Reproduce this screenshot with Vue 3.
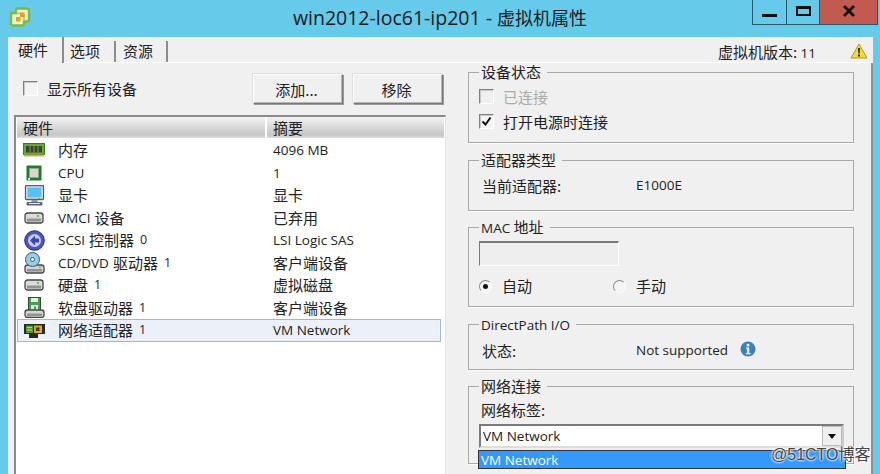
<script setup>
const rows = [
  { icon: 'mem', cjk: '内存', summary: '4096 MB' },
  { icon: 'cpu', lat: 'CPU', summary: '1' },
  { icon: 'monitor', cjk: '显卡', summaryCjk: '显卡' },
  { icon: 'disk', lat: 'VMCI', cjk: '设备', summaryCjk: '已弃用' },
  { icon: 'scsi', lat: 'SCSI', cjk: '控制器', count: '0', summary: 'LSI Logic SAS' },
  { icon: 'cd', lat: 'CD/DVD', cjk: '驱动器', count: '1', summaryCjk: '客户端设备' },
  { icon: 'disk', cjk: '硬盘', count: '1', summaryCjk: '虚拟磁盘' },
  { icon: 'floppy', cjk: '软盘驱动器', count: '1', summaryCjk: '客户端设备' },
  { icon: 'nic', cjk: '网络适配器', count: '1', summary: 'VM Network', selected: true }
]
</script>

<template>
  <div class="win">
    <header class="titlebar">
      <svg class="logo" width="22" height="22" viewBox="0 0 22 22">
        <path d="M9 2.500h9a2 2 0 0 1 2 2v9a2 2 0 0 1-2 2h-3v2a2 2 0 0 1-2 2H4a2 2 0 0 1-2-2V9a2 2 0 0 1 2-2h3V4.500a2 2 0 0 1 2-2z" fill="#eaf3cf" stroke="#7fb83a" stroke-width="2.400"/>
        <path d="M7 7.500h6a2 2 0 0 1 2 2v6" fill="none" stroke="#9ccb5a" stroke-width="1.500"/>
        <rect x="7" y="11" width="4.500" height="4.500" fill="#e8a01f"/>
        <rect x="11" y="6.500" width="4.500" height="4.500" fill="#e8a01f"/>
      </svg>
      <h1 class="title"><span class="t-lat">win2012-loc61-ip201 - </span><span class="t-cjk">虚拟机属性</span></h1>
      <div class="controls">
        <span class="ctl"><i class="min"></i></span>
        <span class="ctl"><i class="max"></i></span>
        <span class="ctl close">
          <svg width="14" height="12" viewBox="0 0 14 12"><path d="M2 1l10 10M12 1L2 11" stroke="#111" stroke-width="2.800"/></svg>
        </span>
      </div>
    </header>

    <main class="panel">
      <div class="tabbar">
        <div class="tabs">
          <span class="tab active">硬件</span>
          <span class="tab">选项</span>
          <span class="tab">资源</span>
        </div>
        <div class="version">
          <span>虚拟机版本: <span class="lat">11</span></span>
          <svg width="18" height="16" viewBox="0 0 18 16">
            <path d="M9 1 L17 15 H1 Z" fill="#f6d93a" stroke="#b59a1a" stroke-linejoin="round"/>
            <path d="M8 5h2l-.4 5.500H8.400z" fill="#222"/>
            <rect x="8" y="11.500" width="2" height="2" fill="#222"/>
          </svg>
        </div>
      </div>

      <div class="content">
        <section class="left">
          <div class="toolbar">
            <label class="show-all"><span class="box"></span>显示所有设备</label>
            <div class="buttons">
              <button class="btn">添加...</button>
              <button class="btn">移除</button>
            </div>
          </div>
          <div class="list">
            <div class="list-head">
              <span class="col-a">硬件</span>
              <span class="col-b">摘要</span>
            </div>
            <div v-for="(r, i) in rows" :key="i" class="row" :class="{ selected: r.selected }">
              <span class="col-a cell">
                <span class="ico">
                  <svg v-if="r.icon === 'mem'" width="22" height="14" viewBox="0 0 22 14">
                    <rect x="0.500" y="0.500" width="21" height="11" fill="#66a63c" stroke="#3b7a22"/>
                    <rect x="3" y="3" width="16" height="6.500" fill="#35491f"/>
                    <path d="M7 3v6.500M11 3v6.500M15 3v6.500" stroke="#8b9a60"/>
                    <rect x="1" y="11.500" width="20" height="2" fill="#bdb84f"/>
                  </svg>
                  <svg v-else-if="r.icon === 'cpu'" width="16" height="16" viewBox="0 0 16 16">
                    <rect x="0.500" y="0.500" width="15" height="15" fill="#1f7a2a"/>
                    <rect x="3.500" y="3.500" width="9" height="9" fill="#d8d8cc" stroke="#8ca98c"/>
                    <rect x="2" y="13" width="2" height="2" fill="#dfe8df"/>
                  </svg>
                  <svg v-else-if="r.icon === 'monitor'" width="21" height="21" viewBox="0 0 21 21">
                    <rect x="1.500" y="0.500" width="18" height="14" rx="1" fill="#dfe5ec" stroke="#51606e" stroke-width="1.300"/>
                    <rect x="3.500" y="2.500" width="14" height="10" fill="#5ac0f2"/>
                    <rect x="14" y="13" width="2" height="1" fill="#63c03d"/>
                    <path d="M8 15h5l1 2H7z" fill="#8a96a2"/>
                    <rect x="2.500" y="17" width="16" height="3.500" rx="1" fill="#5c6873"/>
                    <path d="M5 18.500h11" stroke="#dfe5ec"/>
                  </svg>
                  <svg v-else-if="r.icon === 'disk'" width="20" height="12" viewBox="0 0 20 12">
                    <rect x="1" y="1" width="18" height="10" rx="2.500" fill="#dcdcd6" stroke="#45484a" stroke-width="1.300"/>
                    <rect x="3" y="6.500" width="14" height="3" fill="#8f9492"/>
                    <rect x="13" y="3" width="2" height="2" fill="#63c03d"/>
                  </svg>
                  <svg v-else-if="r.icon === 'scsi'" width="21" height="21" viewBox="0 0 21 21">
                    <circle cx="10.500" cy="10.500" r="9.800" fill="#4a55c0" stroke="#2a2e78"/>
                    <circle cx="10.500" cy="10.500" r="6.500" fill="#c8ccf2"/>
                    <path d="M11 5.500l-5 5 5 5v-3h4v-4h-4z" fill="#3b46b0"/>
                  </svg>
                  <svg v-else-if="r.icon === 'cd'" width="21" height="22" viewBox="0 0 21 22">
                    <rect x="1" y="13" width="19" height="8" rx="2.500" fill="#d4d6d2" stroke="#45484a" stroke-width="1.300"/>
                    <rect x="3" y="17" width="15" height="2.500" fill="#8f9492"/>
                    <circle cx="8.500" cy="7.500" r="7" fill="#8fd0ee" stroke="#375a70"/>
                    <circle cx="8.500" cy="7.500" r="2" fill="#fff" stroke="#375a70"/>
                    <rect x="15" y="14.500" width="2" height="1.500" fill="#63c03d"/>
                  </svg>
                  <svg v-else-if="r.icon === 'floppy'" width="21" height="21" viewBox="0 0 21 21">
                    <rect x="4.500" y="0.500" width="12" height="14" fill="#4f9a54" stroke="#2c4f30"/>
                    <rect x="7" y="1" width="7" height="4" fill="#e8efe6"/>
                    <rect x="7" y="8" width="7" height="6" fill="#dfe6dd"/>
                    <rect x="10" y="9.500" width="2" height="3" fill="#4f9a54"/>
                    <rect x="1" y="13" width="19" height="7.500" rx="2.500" fill="#d4d6d2" stroke="#45484a" stroke-width="1.300"/>
                    <rect x="3" y="16.500" width="15" height="2.500" fill="#8f9492"/>
                  </svg>
                  <svg v-else width="21" height="15" viewBox="0 0 21 15">
                    <path d="M0 1h21v10h-7v4H5v-4H0z" fill="#2c2a20"/>
                    <rect x="2" y="2.500" width="7" height="7.500" fill="#4f9a35"/>
                    <rect x="10" y="2.500" width="8" height="7.500" fill="#d8a82a"/>
                    <rect x="12" y="4.500" width="3.500" height="3.500" fill="#5a2a18"/>
                    <path d="M3 4.500h5M3 7h5" stroke="#d8d04a"/>
                  </svg>
                </span>
                <span v-if="r.lat" class="lat">{{ r.lat }}</span>
                <span v-if="r.cjk" :class="{ spaced: r.lat }">{{ r.cjk }}</span>
                <span v-if="r.count" class="count lat">{{ r.count }}</span>
              </span>
              <span class="col-b cell">
                <span v-if="r.summary" class="lat">{{ r.summary }}</span>
                <span v-else>{{ r.summaryCjk }}</span>
              </span>
            </div>
          </div>
        </section>

        <section class="right">
          <fieldset class="group g1">
            <legend>设备状态</legend>
            <label class="check off"><span class="box"></span>已连接</label>
            <label class="check">
              <span class="box">
                <svg width="13" height="13" viewBox="0 0 13 13"><path d="M2.500 6.500l3 3 5-7" fill="none" stroke="#111" stroke-width="2"/></svg>
              </span>打开电源时连接
            </label>
          </fieldset>

          <fieldset class="group g2">
            <legend>适配器类型</legend>
            <div class="kv"><span class="k">当前适配器:</span><span class="lat">E1000E</span></div>
          </fieldset>

          <fieldset class="group g3">
            <legend><span class="lat">MAC</span> 地址</legend>
            <div class="mac"></div>
            <div class="radios">
              <label class="radio on"><span class="dot"></span>自动</label>
              <label class="radio"><span class="dot"></span>手动</label>
            </div>
          </fieldset>

          <fieldset class="group g4">
            <legend><span class="lat">DirectPath I/O</span></legend>
            <div class="kv">
              <span class="k">状态:</span>
              <span class="lat">Not supported</span>
              <svg class="info" width="16" height="16" viewBox="0 0 16 16">
                <circle cx="8" cy="8" r="7.500" fill="#3a80c8"/>
                <circle cx="8" cy="4.200" r="1.400" fill="#fff"/>
                <path d="M6 6.500h3.200v5.500h1.300v1.300h-4.500v-1.300h1.200V7.800H6z" fill="#fff"/>
              </svg>
            </div>
          </fieldset>

          <fieldset class="group g5">
            <legend>网络连接</legend>
            <div class="net-label">网络标签:</div>
            <div class="combo">
              <span class="lat">VM Network</span>
              <span class="arrow"><i></i></span>
            </div>
            <div class="drop"><span class="lat">VM Network</span></div>
          </fieldset>
        </section>
      </div>
    </main>

    <div class="watermark">@51CTO博客</div>
  </div>
</template>

<style>
html, body { margin: 0; padding: 0; }
</style>

<style scoped>
.win {
  position: relative;
  width: 880px;
  height: 474px;
  overflow: hidden;
  background: #66cbeb;
  font-family: "Noto Sans CJK SC", "Open Sans", sans-serif;
  color: #222;
  display: flex;
  flex-direction: column;
  font-size: 15px;
}
.lat {
  font-family: "Open Sans", sans-serif;
  font-size: 13.500px;
}
.spaced { margin-left: 4px; }
.titlebar {
  height: 37px;
  flex: none;
  position: relative;
  display: flex;
  align-items: center;
  justify-content: center;
}
.logo { position: absolute; left: 9px; top: 6px; }
.title {
  margin: 0 0 7px 0;
  font-weight: 400;
  color: #1a1a1a;
  line-height: 26px;
  white-space: pre;
}
.t-lat { font-family: "Open Sans", sans-serif; font-size: 19.500px; }
.t-cjk { font-size: 18px; }
.controls {
  position: absolute;
  top: 0;
  left: 752px;
  display: flex;
  height: 25px;
  border: 1px solid #2c5566;
  border-top: 0;
  box-sizing: border-box;
}
.ctl {
  width: 33px;
  display: flex;
  align-items: center;
  justify-content: center;
  border-right: 1px solid #2c5566;
}
.ctl:nth-child(2) { width: 32px; }
.ctl.close { width: 57px; background: #c25a50; border-right: 0; padding-bottom: 3px; box-sizing: border-box; }
.min { width: 15px; height: 3px; background: #111; margin-top: 7px; }
.max { width: 11px; height: 5px; border: 2px solid #111; border-top-width: 3px; margin-bottom: 3px; }

.panel {
  margin: 0 7px 0 8px;
  flex: 1;
  background: #f0f0f0;
  border-right: 2px solid #8f8f8f;
  box-sizing: border-box;
  display: flex;
  flex-direction: column;
  min-height: 0;
}
.tabbar {
  height: 26px;
  flex: none;
  display: flex;
  justify-content: space-between;
  border-bottom: 1px solid #fff;
  box-sizing: border-box;
  margin-right: -2px;
  background: #f0f0f0;
}
.tabs { display: flex; align-items: flex-end; padding-left: 2px; }
.tab {
  height: 21px;
  padding: 0 0 0 6px;
  line-height: 20px;
  border-right: 2px solid #8d8d8d;
  box-sizing: border-box;
  width: 52px;
}
.tab:last-child { padding-left: 7px; }
.tab.active {
  height: 26px;
  width: 54px;
  line-height: 25px;
  padding-left: 8px;
  margin-bottom: -1px;
  position: relative;
  background: #f0f0f0;
}
.version {
  display: flex;
  align-items: center;
  gap: 34px;
  padding: 3px 5px 0 0;
}
.content {
  flex: 1;
  display: flex;
  min-height: 0;
  padding-left: 6px;
}
.left { width: 432px; flex: none; display: flex; flex-direction: column; min-height: 0; }
.toolbar {
  height: 52px;
  flex: none;
  display: flex;
  justify-content: space-between;
  padding-top: 11px;
  box-sizing: border-box;
}
.show-all { display: flex; align-items: center; gap: 9px; height: 30px; padding-left: 9px; margin-top: -1px; }
.box {
  width: 13px;
  height: 13px;
  background: #f4f4f4;
  border: 1px solid;
  border-color: #808080 #fff #fff #808080;
  box-shadow: inset 1px 1px 0 #c8c8c8;
  display: inline-flex;
  flex: none;
  box-sizing: content-box;
  align-items: center;
  justify-content: center;
}
.buttons { display: flex; gap: 10px; padding-right: 3px; }
.btn {
  width: 90px;
  height: 30px;
  padding: 0 3px 0 0;
  background: #f0f0f0;
  font: inherit;
  color: #222;
  border: 1px solid;
  border-color: #fff #777 #777 #fff;
  box-shadow: 1px 1px 0 #999, inset -1px -1px 0 #b8b8b8, -1px -1px 0 #ddd;
}
.list {
  flex: 1;
  background: #fff;
  border-top: 2px solid #8a8a8a;
  border-left: 2px solid #8a8a8a;
  border-right: 1px solid #e2e2e2;
  min-height: 0;
  box-sizing: border-box;
  padding-right: 4px;
}
.list-head {
  display: flex;
  height: 21px;
  align-items: center;
  background: linear-gradient(#f2f2f2 0, #c6c6c6 85%, #dddddd 100%);
  border-bottom: 1px solid #fff;
  margin-right: -3px;
  color: #222;
  margin-left: 1px;
}
.col-a { width: 250px; box-sizing: border-box; padding-left: 6px; flex: none; }
.list-head .col-a { border-right: 2px solid #fff; height: 100%; line-height: 21px; }
.list-head .col-b { padding-left: 6px; }
.row {
  display: flex;
  height: 22.500px;
  align-items: center;
  margin-left: 1px;
  box-sizing: border-box;
  line-height: 20px;
}
.row.selected {
  background: #eaf1f8;
  outline: 1px solid #9db8d8;
  outline-offset: -1px;
}
.cell { display: flex; align-items: center; white-space: nowrap; }
.row .col-b { padding-left: 6px; }
.row .col-a { padding-left: 6px; }
.ico { width: 22px; display: flex; align-items: center; justify-content: center; flex: none; margin-right: 13px; }
.count { margin-left: 6px; font-size: 12.500px; }

.right {
  width: 386px;
  margin-left: 22px;
  display: flex;
  flex-direction: column;
}
.group {
  margin: 0;
  padding: 0 0 0 10px;
  border: 1px solid #a8a8a8;
  box-shadow: 0 1px 0 #fff;
  box-sizing: border-box;
  flex: none;
  position: relative;
  min-width: 0;
}
.group legend {
  padding: 0 6px 0 2px;
  margin-left: 0;
  line-height: 18px;
}
.g1 { height: 80px; }
.g2 { height: 60px; margin-top: 8px; }
.g3 { height: 89px; margin-top: 7px; }
.g4 { height: 55px; margin-top: 8px; }
.g5 { height: 87px; margin-top: 7px; }
.check { display: flex; align-items: center; gap: 9px; height: 25px; }
.check:first-of-type { margin-top: 3px; }
.check.off { color: #aaa; }
.check.off .box { background: #efefef; }
.kv { display: flex; align-items: center; height: 22px; margin-top: 5px; padding-left: 3px; }
.k { width: 154px; }
.info { margin-left: 12px; margin-bottom: 2px; }
.mac {
  width: 140px;
  height: 25px;
  margin-top: 4px;
  box-sizing: border-box;
  border: 1px solid;
  border-top: 2px solid #7a7a7a;
  border-color: #7a7a7a #fff #fff #7a7a7a;
  background: #eee;
}
.radios { display: flex; margin-top: 9px; }
.radio { display: flex; align-items: center; gap: 10px; width: 134px; line-height: 22px; }
.dot {
  width: 13px;
  height: 13px;
  border-radius: 50%;
  background: #f4f4f4;
  border: 1px solid #fff;
  border-top-color: #888;
  border-left-color: #888;
  box-sizing: border-box;
  position: relative;
}
.radio.on .dot::after {
  content: "";
  position: absolute;
  left: 3px;
  top: 3px;
  width: 5px;
  height: 5px;
  border-radius: 50%;
  background: #111;
}
.net-label { line-height: 20px; margin-top: 5px; padding-left: 2px; }
.combo {
  width: 365px;
  height: 24px;
  margin-top: 4px;
  background: #fff;
  box-sizing: border-box;
  border: 2px solid #7a7a7a;
  border-right-color: #ccc;
  border-bottom-color: #ddd;
  display: flex;
  justify-content: space-between;
  align-items: center;
  padding-left: 2px;
}
.arrow {
  width: 20px;
  height: 20px;
  background: #f0f0f0;
  border: 1px solid #bbb;
  box-sizing: border-box;
  display: flex;
  align-items: center;
  justify-content: center;
}
.arrow i {
  width: 0;
  height: 0;
  border-left: 4px solid transparent;
  border-right: 4px solid transparent;
  border-top: 5px solid #111;
}
.drop {
  position: absolute;
  left: 9px;
  top: 55px;
  width: 368px;
  height: 19px;
  box-sizing: border-box;
  background: #3399ff;
  color: #fff;
  border: 1px solid #333;
  padding-left: 2px;
  line-height: 16px;
}
.watermark {
  position: absolute;
  left: 771px;
  top: 445px;
  font-size: 16px;
  line-height: 20px;
  color: #444;
  font-family: "Liberation Sans", "Noto Sans CJK SC", sans-serif;
  text-shadow: 0 0 2px #fff, 0 0 2px #fff, 0 0 3px #fff;
}
</style>
